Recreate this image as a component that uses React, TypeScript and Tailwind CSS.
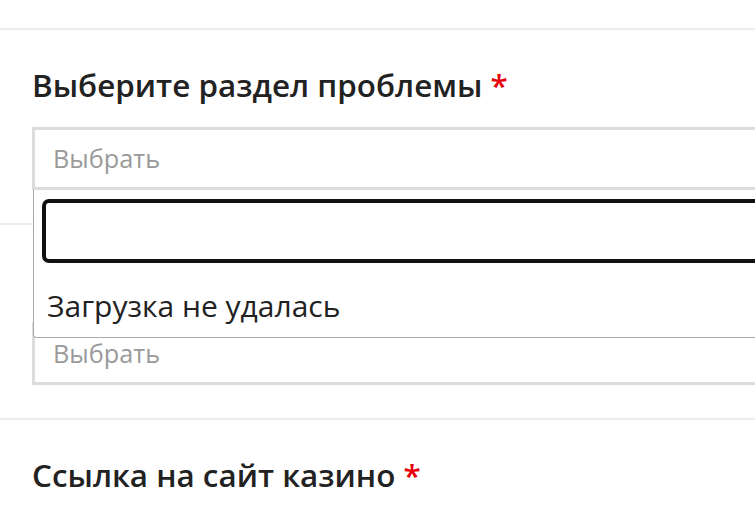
import React from 'react';

// Form sections; the second heading sits under the open dropdown, so it is left blank
const sections = [
  { title: 'Выберите раздел проблемы', select: true },
  { title: '', select: true },
  { title: 'Ссылка на сайт казино', select: false },
];

function Heading({ title }: { title: string }) {
  if (!title) return <div className="h-[36px]" />;
  return (
    <div className="h-[36px] text-[31.4px] leading-[36px] font-semibold text-[#222222] whitespace-nowrap">
      {title} <span className="text-[#e8000b]">*</span>
    </div>
  );
}

function Dropdown() {
  return (
    <div className="absolute left-[1px] top-[63px] w-[800px] h-[148px] bg-white border border-[#a9a9a9] border-t-0 rounded-b-[4px] z-10 pt-[9px] pl-[8px]">
      <div className="h-[64px] border-[4px] border-[#111111] rounded-[7px]" />
      <div className="mt-[26px] pl-[5px] text-[30px] leading-[34px] text-[#222222] whitespace-nowrap">
        Загрузка не удалась
      </div>
    </div>
  );
}

function Select({ open }: { open?: boolean }) {
  return (
    <div className="relative w-[800px]">
      <div className="h-[63px] border-[3px] border-[#dcdcdc] flex items-center pl-[18px] text-[25.3px] text-[#9a9a9a]">
        Выбрать
      </div>
      {open && <Dropdown />}
    </div>
  );
}

export default function App() {
  return (
    <div
      className="w-[755px] h-[515px] overflow-hidden bg-white"
      style={{ fontFamily: '"Open Sans", "Noto Sans", sans-serif' }}
    >
      <div className="h-[28px]" />
      {sections.map((s, i) => (
        <div key={i}>
          <div className="h-[2px] bg-[#ebebeb]" />
          <div className="pl-[32px] pt-[37px] pb-[33px]">
            <Heading title={s.title} />
            {s.select && (
              <div className="mt-[24px]">
                <Select open={i === 0} />
              </div>
            )}
          </div>
        </div>
      ))}
    </div>
  );
}
